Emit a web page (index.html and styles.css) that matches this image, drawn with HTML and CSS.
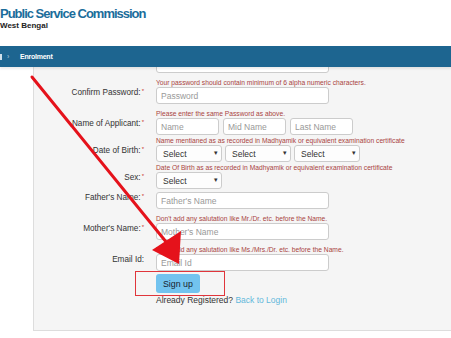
FILE: index.html
```html
<!DOCTYPE html>
<html lang="en">
<head>
    <meta charset="UTF-8">
    <meta name="viewport" content="width=device-width, initial-scale=1.0">
    <title>Enrolment - Public Service Commission</title>
    <link rel="stylesheet" href="styles.css">
</head>
<body>
    <header class="site-header">
        <h1 class="site-title">Public Service Commission</h1>
        <p class="site-subtitle">West Bengal</p>
    </header>

    <nav class="breadcrumb">
        <span class="crumb-home"></span>
        <span class="crumb-sep">&rsaquo;</span>
        <span>Enrolment</span>
    </nav>

    <main class="content">
        <section class="panel">
            <form class="signup" action="#" method="POST">
                <div class="form-row cut">
                    <span class="form-label"></span>
                    <div class="field">
                        <input class="text-input" type="password" id="pass">
                        <p class="help-text">Your password should contain minimum of 6 alpha numeric characters.</p>
                    </div>
                </div>

                <div class="form-row">
                    <label class="form-label" for="cpass">Confirm Password:<sup>*</sup></label>
                    <div class="field">
                        <input class="text-input" type="password" id="cpass" placeholder="Password">
                        <p class="help-text">Please enter the same Password as above.</p>
                    </div>
                </div>

                <div class="form-row">
                    <label class="form-label" for="fname">Name of Applicant:<sup>*</sup></label>
                    <div class="field">
                        <div class="inline-group">
                            <input class="text-input small" type="text" id="fname" placeholder="Name">
                            <input class="text-input small" type="text" placeholder="Mid Name">
                            <input class="text-input small" type="text" placeholder="Last Name">
                        </div>
                        <p class="help-text tight">Name mentianed as as recorded in Madhyamik or equivalent examination certificate</p>
                    </div>
                </div>

                <div class="form-row">
                    <label class="form-label">Date of Birth:<sup>*</sup></label>
                    <div class="field">
                        <div class="inline-group selects">
                            <span class="select-box"><select><option>Select</option></select></span>
                            <span class="select-box"><select><option>Select</option></select></span>
                            <span class="select-box"><select><option>Select</option></select></span>
                        </div>
                        <p class="help-text tight">Date Of Birth as as recorded in Madhyamik or equivalent examination certificate</p>
                    </div>
                </div>

                <div class="form-row">
                    <label class="form-label">Sex:<sup>*</sup></label>
                    <div class="field">
                        <span class="select-box"><select><option>Select</option></select></span>
                    </div>
                </div>

                <div class="form-row spaced">
                    <label class="form-label" for="father">Father's Name:<sup>*</sup></label>
                    <div class="field">
                        <input class="text-input" type="text" id="father" placeholder="Father's Name">
                        <p class="help-text">Don't add any salutation like Mr./Dr. etc. before the Name.</p>
                    </div>
                </div>

                <div class="form-row">
                    <label class="form-label" for="mother">Mother's Name:<sup>*</sup></label>
                    <div class="field">
                        <input class="text-input" type="text" id="mother" placeholder="Mother's Name">
                        <p class="help-text">Don't add any salutation like Ms./Mrs./Dr. etc. before the Name.</p>
                    </div>
                </div>

                <div class="form-row">
                    <label class="form-label" for="email">Email Id:</label>
                    <div class="field">
                        <input class="text-input" type="email" id="email" placeholder="Email Id">
                    </div>
                </div>

                <div class="form-row actions">
                    <span class="form-label"></span>
                    <div class="field">
                        <button type="submit" class="btn-signup">Sign up</button>
                        <p class="login-link">Already Registered? <a href="#">Back to Login</a></p>
                    </div>
                </div>
            </form>
        </section>
    </main>

    <!-- red markup drawn over the screenshot -->
    <svg class="annotation" width="451" height="338" viewBox="0 0 451 338">
        <line x1="32" y1="77" x2="167" y2="243" stroke="#e5121b" stroke-width="3" stroke-linecap="round"/>
        <polygon points="179,264 181,231 152,250" fill="#e5121b"/>
        <rect x="135.5" y="271.5" width="89" height="24" fill="none" stroke="#e0353b" stroke-width="1"/>
    </svg>
</body>
</html>
```

FILE: styles.css
```css
body {
    margin: 0;
    height: 338px;
    overflow: hidden;
    position: relative;
    font-family: "Liberation Sans", Arial, sans-serif;
    color: #333;
    background-color: #fff;
}

.site-header {
    height: 46px;
    box-sizing: border-box;
    padding-top: 6px;
}

.site-title {
    margin: 0;
    font-size: 13px;
    line-height: 15px;
    font-weight: bold;
    letter-spacing: -1px;
    color: #1b6d9b;
}

.site-subtitle {
    margin: 0;
    font-size: 8px;
    line-height: 10px;
    font-weight: bold;
    color: #222;
}

.breadcrumb {
    height: 21px;
    display: flex;
    align-items: center;
    background-color: #1d6590;
    color: #fff;
    font-size: 7px;
    font-weight: bold;
    letter-spacing: -0.25px;
    box-shadow: 0 2px 2px rgba(0, 0, 0, 0.08);
    position: relative;
    z-index: 1;
}

.crumb-home {
    width: 2px;
    height: 6px;
    background-color: #cfe0ea;
    margin-right: 5px;
}

.crumb-sep {
    color: #8db1c7;
    margin-right: 11px;
}

.content {
    height: 271px;
    overflow: hidden;
    padding-left: 33px;
}

.panel {
    background-color: #f5f5f5;
    border-left: 1px solid #ddd;
    border-bottom: 1px solid #ddd;
    padding-bottom: 25px;
}

.form-row {
    display: grid;
    grid-template-columns: 112px 1fr;
    column-gap: 10px;
}

.form-row.cut {
    margin-top: -11px;
}

.form-row.spaced {
    margin-top: 3px;
}

.form-row.actions {
    margin-top: 3px;
}

.form-label {
    text-align: right;
    font-size: 8.2px;
    line-height: 9px;
    padding-top: 1px;
    padding-right: 2px;
    color: #333;
}

.form-label sup {
    color: #c9302c;
    font-size: 6px;
    line-height: 6px;
    vertical-align: top;
    margin-left: 1px;
}

.text-input {
    display: block;
    box-sizing: border-box;
    width: 173px;
    height: 17px;
    margin: 0;
    padding: 0 4px;
    border: 1px solid #ccc;
    border-radius: 3px;
    background-color: #fff;
    font-family: inherit;
    font-size: 8.5px;
    color: #555;
}

.text-input::placeholder {
    color: #999;
}

.text-input.small {
    width: 63px;
}

.inline-group {
    display: flex;
    gap: 4px;
}

.inline-group.selects {
    gap: 3px;
}

.select-box {
    display: block;
    width: 66px;
    position: relative;
}

.select-box select {
    display: block;
    box-sizing: border-box;
    width: 66px;
    height: 17px;
    margin: 0;
    padding: 0 0 0 6px;
    appearance: none;
    -webkit-appearance: none;
    border: 1px solid #ccc;
    border-radius: 3px;
    background-color: #fdfdfd;
    font-family: inherit;
    font-size: 8.5px;
    color: #333;
}

.select-box::after {
    content: "\25BE";
    position: absolute;
    right: 4px;
    top: 4px;
    font-size: 7px;
    line-height: 8px;
    color: #333;
}

.help-text {
    margin: 6px 0 0;
    font-size: 6.7px;
    line-height: 8px;
    color: #a94442;
    white-space: nowrap;
}

.help-text.tight {
    margin-top: 2px;
}

.btn-signup {
    display: block;
    height: 19px;
    margin: 0;
    padding: 0 7px;
    border: none;
    border-radius: 3px;
    background-color: #72c3ef;
    font-family: inherit;
    font-size: 8.8px;
    color: #16222e;
}

.login-link {
    margin: 2px 0 0;
    font-size: 8.5px;
    line-height: 10px;
    color: #333;
}

.login-link a {
    color: #62b8db;
    text-decoration: none;
}

.annotation {
    position: absolute;
    top: 0;
    left: 0;
    pointer-events: none;
}
```
